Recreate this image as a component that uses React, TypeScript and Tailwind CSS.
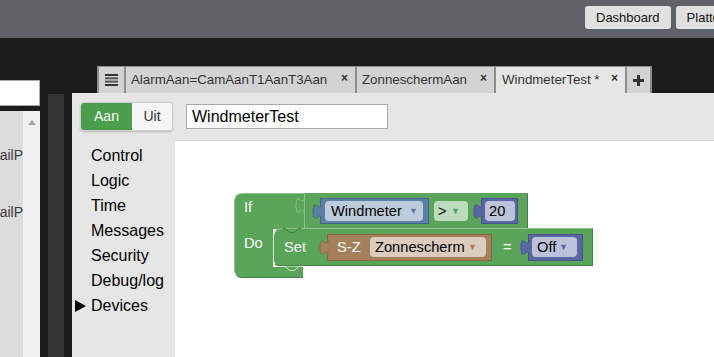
import React from "react";

const GREEN = "#5ba55b";

interface TabProps {
  label?: string;
  active?: boolean;
  className: string;
  children?: React.ReactNode;
}

const Tab = ({ label, active, className, children }: TabProps) => (
  <div
    className={`h-[27px] flex items-center border-l-2 border-t border-[#8e8e8e] text-[13.3px] leading-[16px] text-[#333] ${
      active ? "bg-[#e6e6e6]" : "bg-[#d3d3d3]"
    } ${className}`}
  >
    {children ?? (
      <>
        <span className="whitespace-nowrap">{label}</span>
        <span className="ml-auto mr-[7px] -mt-[5px] text-[12px] font-bold leading-none">×</span>
      </>
    )}
  </div>
);

// left output tab of a value block
const OutputTab = ({ fill, stroke }: { fill: string; stroke: string }) => (
  <svg className="absolute -left-[8px] top-[5px] overflow-visible" width="9" height="15" viewBox="0 0 9 15">
    <path d="M9,0 L8,0 C8,10 0,-8 0,7.5 C0,23 8,5 8,15 L9,15 Z" fill={fill} />
    <path d="M8,0 C8,10 0,-8 0,7.5 C0,23 8,5 8,15" fill="none" stroke={stroke} strokeWidth="1" />
  </svg>
);

interface FieldProps {
  text: string;
  bg: string;
  arrow?: string;
  className?: string;
}

const Field = ({ text, bg, arrow, className = "" }: FieldProps) => (
  <div
    className={`h-[20px] rounded-[4px] flex items-center text-black text-[14.67px] leading-none ${className}`}
    style={{ backgroundColor: bg }}
  >
    <span>{text}</span>
    {arrow && (
      <span className="ml-auto text-[9px]" style={{ color: arrow }}>
        ▼
      </span>
    )}
  </div>
);

const IfBlock = () => (
  <div className="absolute left-[59px] top-[52px] flex flex-col text-white text-[14.67px] leading-none">
    {/* if row */}
    <div className="flex">
      <div className="w-[70px] h-[36px] bg-[#5ba55b] rounded-tl-[8px] border-t border-l border-[#8cc08c] pl-[9px] pt-[6px]">
        If
      </div>
      <div className="relative w-[224px] h-[36px] bg-[#5ba55b] border-t border-l border-b border-r border-t-[#5ba55b] border-l-[#8cc08c] border-b-[#8cc08c] border-r-[#467f46] flex items-center pl-[15px]">
        <svg className="absolute -left-[9px] top-[4px] overflow-visible" width="9" height="15">
          <path d="M8,0 C8,10 0,-8 0,7.5 C0,23 8,5 8,15" fill="none" stroke="#8cc08c" strokeWidth="1" />
        </svg>
        <div className="relative w-[109px] h-[26px] bg-[#5b80a5] border border-[#47658a] flex items-center pl-[4px]">
          <OutputTab fill="#5b80a5" stroke="#47658a" />
          <Field text="Windmeter" bg="#bdccdb" arrow="#5b80a5" className="w-[98px] pl-[6px] pr-[5px]" />
        </div>
        <Field text=">" bg="#bddbbd" arrow="#5ba55b" className="ml-[5px] w-[34px] pl-[4px] pr-[8px]" />
        <div className="relative ml-[13px] w-[37px] h-[26px] bg-[#5b67a5] border border-[#48518a] flex items-center pl-[3px]">
          <OutputTab fill="#5b67a5" stroke="#48518a" />
          <Field text="20" bg="#bdc2db" className="w-[30px] pl-[4px]" />
        </div>
      </div>
    </div>
    {/* do row */}
    <div className="flex">
      <div className="w-[39px] h-[39px] bg-[#5ba55b] border-l border-[#8cc08c] pl-[9px] pt-[7px]">Do</div>
      <div className="relative w-[320px] h-[38px] -mt-[1px] bg-[#5ba55b] rounded-tl-[8px] rounded-bl-[6px] border border-t-[#8cc08c] border-l-[#d7ead7] border-b-[#467f46] border-r-[#467f46] flex items-center pl-[10px]">
        <svg className="absolute left-[9px] -top-[1px]" width="18" height="6">
          <path d="M0,0.5 L2,0.5 L7,4.5 L11,4.5 L16,0.5 L18,0.5" fill="none" stroke="#467f46" strokeWidth="1" />
        </svg>
        <span className="w-[43px]">Set</span>
        <div className="relative w-[165px] h-[27px] bg-[#a5805b] border border-[#8a6647] flex items-center pl-[9px]">
          <OutputTab fill="#a5805b" stroke="#8a6647" />
          <span className="w-[33px]">S-Z</span>
          <Field text="Zonnescherm" bg="#dbccbd" arrow="#a5805b" className="w-[116px] pl-[5px] pr-[9px]" />
        </div>
        <span className="ml-[11px] w-[25px]">=</span>
        <div className="relative w-[55px] h-[27px] bg-[#5b67a5] border border-[#48518a] flex items-center pl-[3px]">
          <OutputTab fill="#5b67a5" stroke="#48518a" />
          <Field text="Off" bg="#bdc2db" arrow="#5b67a5" className="w-[45px] pl-[5px] pr-[9px]" />
        </div>
      </div>
    </div>
    {/* bottom arm */}
    <div className="relative w-[69px] h-[11px] -mt-[1px] bg-[#5ba55b] rounded-bl-[8px] border-l border-b border-l-[#8cc08c] border-b-[#467f46]">
      <svg className="absolute left-[48px] -top-[1px]" width="18" height="6">
        <path d="M0,0.5 L2,0.5 L7,4.5 L11,4.5 L16,0.5 L18,0.5" fill={GREEN} stroke="#d7ead7" strokeWidth="1" />
      </svg>
    </div>
  </div>
);

const categories = ["Control", "Logic", "Time", "Messages", "Security", "Debug/log", "Devices"];

export default function App() {
  return (
    <div className="w-[714px] h-[357px] overflow-hidden flex flex-col bg-[#1c1c1c] font-['Liberation_Sans',Arial,sans-serif]">
      <header className="h-[38px] shrink-0 bg-[#5f6367] flex items-start gap-[5px] pl-[585px] pt-[6px] overflow-hidden">
        <button className="h-[23px] px-[11px] rounded-[3px] bg-[#e1e1e1] text-[13px] text-[#111] whitespace-nowrap">
          Dashboard
        </button>
        <button className="h-[23px] px-[11px] rounded-[3px] bg-[#e1e1e1] text-[13px] text-[#111] whitespace-nowrap shrink-0">
          Plattegrond
        </button>
      </header>

      <div className="flex-1 flex min-h-0">
        {/* left panel (clipped) */}
        <div className="w-[40px] shrink-0 flex flex-col pt-[42px]">
          <div className="h-[26px] bg-white border border-[#a9a9a9] border-l-0" />
          <div className="flex-1 mt-[5px] flex">
            <div className="w-[23px] bg-[#dcdcdc] flex flex-col text-[14px] leading-[16px] text-[#3a3a3a]">
              <div className="mt-[36px] flex justify-end overflow-hidden whitespace-nowrap">EmailP</div>
              <div className="mt-[41px] flex justify-end overflow-hidden whitespace-nowrap">EmailP</div>
            </div>
            <div className="w-[17px] bg-[#f0f0f0] flex justify-center pt-[9px]">
              <svg width="8" height="5" viewBox="0 0 8 5">
                <path d="M0,5 L4,0 L8,5 Z" fill="#a3a3a3" />
              </svg>
            </div>
          </div>
        </div>

        {/* dark gap */}
        <div className="w-[32px] shrink-0 pl-[8px] pt-[56px] flex">
          <div className="w-[16px] bg-[#333333]" />
        </div>

        {/* main */}
        <div className="flex-1 flex flex-col">
          <div className="h-[55px] shrink-0 pt-[28px] pl-[25px] flex">
            <Tab className="w-[27px] justify-center">
              <svg width="13" height="12" viewBox="0 0 13 12">
                <rect x="0" y="0" width="13" height="2" fill="#333" />
                <rect x="0" y="3.3" width="13" height="2" fill="#555" />
                <rect x="0" y="6.6" width="13" height="2" fill="#555" />
                <rect x="0" y="10" width="13" height="2" fill="#333" />
              </svg>
            </Tab>
            <Tab className="w-[231px] pl-[5px]" label="AlarmAan=CamAanT1AanT3Aan" />
            <Tab className="w-[139px] pl-[5px]" label="ZonneschermAan" />
            <Tab className="w-[131px] pl-[6px]" label="WindmeterTest *" active />
            <Tab className="w-[27px] justify-center border-r-2">
              <svg width="11" height="11" viewBox="0 0 11 11">
                <rect x="4" y="0" width="3" height="11" fill="#333" />
                <rect x="0" y="4" width="11" height="3" fill="#333" />
              </svg>
            </Tab>
          </div>

          <div className="flex-1 flex flex-col bg-[#e6e6e6] min-h-0">
            <div className="h-[47px] shrink-0 flex items-start pl-[8px] pt-[9px]">
              <div className="flex h-[29px] rounded-[4px] overflow-hidden border border-[#cfcfcf] shadow-[0_1px_2px_rgba(0,0,0,0.2)] text-[14px]">
                <div className="w-[51px] bg-[#4a9e4c] text-white flex items-center justify-center">Aan</div>
                <div className="w-[40px] bg-[#f5f5f5] text-[#333] flex items-center justify-center">Uit</div>
              </div>
              <div className="ml-[13px] mt-[2px] w-[202px] h-[25px] bg-white border border-[#a9a9a9] pl-[5px] flex items-center text-[16px] text-black">
                WindmeterTest
              </div>
            </div>

            <div className="flex-1 flex min-h-0">
              <ul className="w-[103px] shrink-0 pt-[3px] text-[16px] leading-[25px] text-black">
                {categories.map((c) => (
                  <li key={c} className="flex items-center">
                    <span className="w-[19px] flex pl-[3px]">
                      {c === "Devices" && (
                        <svg width="11" height="12" viewBox="0 0 11 12">
                          <path d="M0,0 L11,6 L0,12 Z" fill="#000" />
                        </svg>
                      )}
                    </span>
                    {c}
                  </li>
                ))}
              </ul>
              <div className="flex-1 relative bg-white border-t border-[#dadada]">
                <IfBlock />
              </div>
            </div>
          </div>
        </div>
      </div>
    </div>
  );
}
